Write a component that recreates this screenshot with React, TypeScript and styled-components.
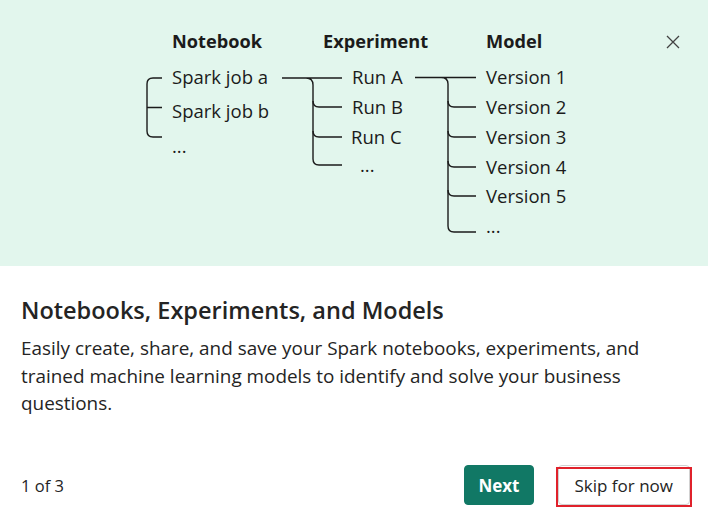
import React from "react";
import styled, { createGlobalStyle } from "styled-components";

const Global = createGlobalStyle`
  html, body { margin: 0; padding: 0; background: #ffffff; }
  body { font-family: "Open Sans", "Noto Sans", sans-serif; color: #242424; }
  * { box-sizing: border-box; }
`;

const Card = styled.div`
  position: relative;
  width: 708px;
  height: 524px;
  background: #ffffff;
  display: flex;
  flex-direction: column;
`;

const Hero = styled.div`
  position: relative;
  height: 266px;
  background: #e2f6ed;
  padding: 18px 0 0 140px;
`;

const CloseButton = styled.button`
  position: absolute;
  top: 31px;
  right: 24px;
  width: 22px;
  height: 22px;
  padding: 0;
  border: none;
  background: transparent;
  display: flex;
  align-items: center;
  justify-content: center;
  cursor: pointer;
`;

const Body = styled.div`
  flex: 1;
  display: flex;
  flex-direction: column;
  padding: 28px 18px 19px 21px;
`;

const Title = styled.h2`
  margin: 0;
  font-family: "Open Sans", "Noto Sans", sans-serif;
  font-weight: 600;
  font-size: 23.5px;
  line-height: 32px;
  color: #242424;
`;

const Description = styled.p`
  margin: 9px 0 0 0;
  font-size: 18.9px;
  line-height: 27.5px;
  color: #242424;
  width: 650px;
`;

const Footer = styled.div`
  margin-top: auto;
  display: flex;
  align-items: center;
  gap: 24px;
`;

const Counter = styled.span`
  font-size: 16.5px;
  color: #242424;
  flex: 1;
`;

const Button = styled.button<{ $primary?: boolean }>`
  height: 40px;
  padding: 0 ${(p) => (p.$primary ? 13 : 16)}px;
  border-radius: 4px;
  font-family: "Open Sans", "Noto Sans", sans-serif;
  font-size: 17px;
  font-weight: ${(p) => (p.$primary ? 700 : 400)};
  color: ${(p) => (p.$primary ? "#ffffff" : "#242424")};
  background: ${(p) => (p.$primary ? "#117865" : "#ffffff")};
  border: 1px solid ${(p) => (p.$primary ? "#117865" : "#d1d1d1")};
  cursor: pointer;
`;

const SkipWrap = styled.div`
  position: relative;
  display: flex;
`;

const Highlight = styled.div`
  position: absolute;
  left: -2px;
  right: -2px;
  top: 2px;
  bottom: -2px;
  border: 2px solid #e0212b;
  pointer-events: none;
`;

const DiagramSvg = styled.svg`
  display: block;
  font-family: "Open Sans", "Noto Sans", sans-serif;
`;

const Label = styled.text<{ $head?: boolean }>`
  font-size: ${(p) => (p.$head ? 18.2 : 18.5)}px;
  font-weight: ${(p) => (p.$head ? 700 : 400)};
  fill: #1b1b1b;
`;

const Connector = styled.path`
  stroke: #1b1b1b;
  stroke-width: 1.4;
  fill: none;
`;

const versions = [77, 107, 137, 167, 196];

function Diagram() {
  return (
    <DiagramSvg width={440} height={230} viewBox="140 18 440 230">
      <Label $head x={172} y={48}>Notebook</Label>
      <Label $head x={323} y={48}>Experiment</Label>
      <Label $head x={486} y={48}>Model</Label>

      <Label x={172} y={84}>Spark job a</Label>
      <Label x={172} y={118}>Spark job b</Label>
      <Label x={172} y={153}>...</Label>

      <Label x={352} y={84}>Run A</Label>
      <Label x={352} y={114}>Run B</Label>
      <Label x={351} y={144}>Run C</Label>
      <Label x={360} y={172}>...</Label>

      {versions.map((v, i) => (
        <Label key={i} x={486} y={v + 7}>{`Version ${i + 1}`}</Label>
      ))}
      <Label x={486} y={233}>...</Label>

      <Connector d="M162 78 H153 Q147 78 147 84 V131 Q147 137 153 137 H162 M147 107.5 H162" />

      <Connector d="M282 78 H342 M306 78 Q313 78 313 85 V159 Q313 165 319 165 H342" />
      <Connector d="M313 101 Q313 107 319 107 H342 M313 131 Q313 137 319 137 H342" />

      <Connector d="M415 77.5 H476 M441 77.5 Q448 77.5 448 84 V226 Q448 232 454 232 H476" />
      {versions.slice(1).map((v) => (
        <Connector key={v} d={`M448 ${v - 6} Q448 ${v} 454 ${v} H476`} />
      ))}
    </DiagramSvg>
  );
}

export default function App() {
  return (
    <Card>
      <Global />
      <Hero>
        <Diagram />
        <CloseButton aria-label="Close">
          <svg width="14" height="14" viewBox="0 0 14 14">
            <path d="M1 1 L13 13 M13 1 L1 13" stroke="#424242" strokeWidth="1.3" fill="none" />
          </svg>
        </CloseButton>
      </Hero>
      <Body>
        <Title>Notebooks, Experiments, and Models</Title>
        <Description>
          Easily create, share, and save your Spark notebooks, experiments, and trained machine learning models to identify and solve your business questions.
        </Description>
        <Footer>
          <Counter>1 of 3</Counter>
          <Button $primary>Next</Button>
          <SkipWrap>
            <Button>Skip for now</Button>
            <Highlight />
          </SkipWrap>
        </Footer>
      </Body>
    </Card>
  );
}
